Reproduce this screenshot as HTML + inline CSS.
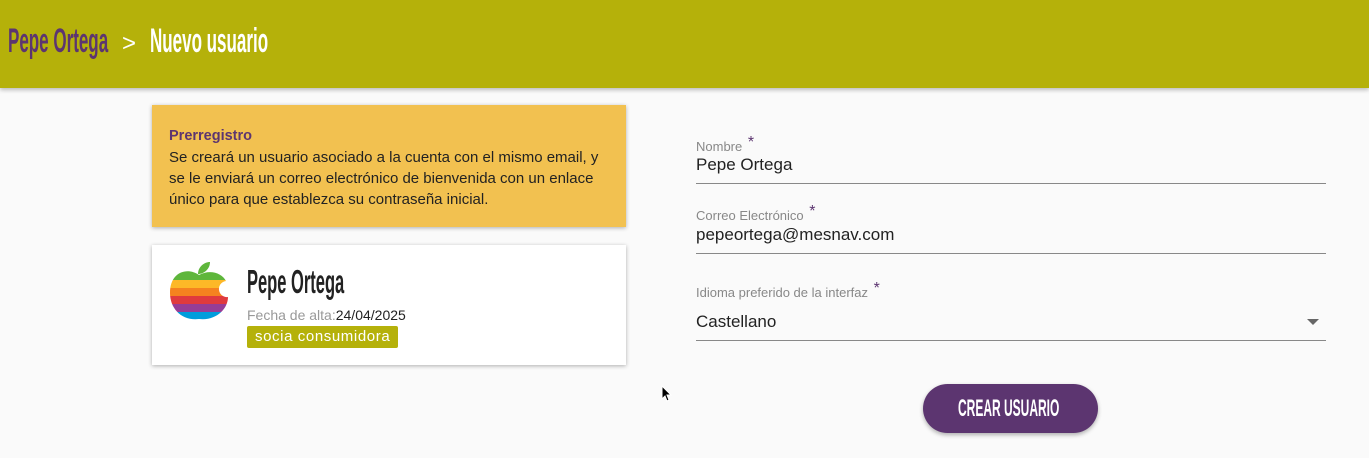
<!DOCTYPE html>
<html><head><meta charset="utf-8"><style>
body{margin:0;width:1369px;height:458px;background:#fafafa;font-family:"Liberation Sans",sans-serif;position:relative;overflow:hidden}
.hdr{position:absolute;left:0;top:0;width:1369px;height:88px;background:#b5b10a;box-shadow:0 2px 4px rgba(0,0,0,.25)}
.cond{font-family:"Liberation Sans Narrow","Liberation Sans",sans-serif;font-weight:bold;display:inline-block;transform:scaleX(.5);transform-origin:left;white-space:nowrap}
.hdr .t{position:absolute;top:22px;font-size:34px}
.card{position:absolute;background:#fff;box-shadow:0 1px 4px rgba(0,0,0,.3)}
.lbl{position:absolute;font-size:13px;color:#888}
.lbl b{color:#5c3570;font-size:16px;font-weight:normal;position:relative;top:-4px;left:2px}
.val{position:absolute;font-size:17px;color:#222}
.line{position:absolute;left:696px;width:630px;height:1px;background:#888}
</style></head><body>
<div class="hdr">
<span class="t cond" style="left:8px;color:#5c3570">Pepe Ortega</span>
<span style="position:absolute;left:122px;top:30px;color:#fff;font-size:24px">&gt;</span>
<span class="t cond" style="left:150px;color:#fff">Nuevo usuario</span>
</div>
<div class="card" style="left:152px;top:105px;width:474px;height:122px;background:#f2c150">
<div style="position:absolute;left:17px;top:20px;font-size:15px;line-height:21px;color:#222;width:440px"><b style="color:#5c3570;font-size:14.5px">Prerregistro</b><br>Se creará un usuario asociado a la cuenta con el mismo email, y se le enviará un correo electrónico de bienvenida con un enlace único para que establezca su contraseña inicial.</div>
</div>
<div class="card" style="left:152px;top:245px;width:474px;height:120px">
<svg style="position:absolute;left:16px;top:14px" width="62" height="64" viewBox="0 0 62 64">
<defs><clipPath id="c"><path d="M31 16 C20 8 2 12 2 34 C2 50 14 62 31 60 C48 62 60 50 60 38 A8 8 0 0 1 58 22 C54 14 42 10 31 16Z"/></clipPath></defs>
<path d="M30 15 C30 8 36 3 42 3 C42 10 36 15 30 15Z" fill="#5eb63b"/>
<g clip-path="url(#c)">
<rect x="0" y="0" width="62" height="21" fill="#5eb63b"/>
<rect x="0" y="21" width="62" height="8" fill="#fdb827"/>
<rect x="0" y="29" width="62" height="8" fill="#f5821f"/>
<rect x="0" y="37" width="62" height="8" fill="#e03a3e"/>
<rect x="0" y="45" width="62" height="8" fill="#963d97"/>
<rect x="0" y="53" width="62" height="11" fill="#009ddc"/>
</g></svg>
<span class="cond" style="position:absolute;left:95px;top:18px;font-size:33px;color:#222">Pepe Ortega</span>
<div style="position:absolute;left:95px;top:62px;font-size:14px;color:#999">Fecha de alta:<span style="color:#222">24/04/2025</span></div>
<div style="position:absolute;left:95px;top:81px;height:22px;padding:0 8px;background:#b5b10a;color:#fff;font-size:15px;line-height:22px;border-radius:2px;letter-spacing:.6px">socia consumidora</div>
</div>
<div class="lbl" style="left:696px;top:138px">Nombre <b>*</b></div>
<div class="val" style="left:696px;top:155px">Pepe Ortega</div>
<div class="line" style="top:183px"></div>
<div class="lbl" style="left:696px;top:207px">Correo Electrónico <b>*</b></div>
<div class="val" style="left:696px;top:225px">pepeortega@mesnav.com</div>
<div class="line" style="top:253px"></div>
<div class="lbl" style="left:696px;top:284px">Idioma preferido de la interfaz <b>*</b></div>
<div class="val" style="left:696px;top:312px">Castellano</div>
<div style="position:absolute;left:1307px;top:319px;width:0;height:0;border-left:6px solid transparent;border-right:6px solid transparent;border-top:6px solid #666"></div>
<div class="line" style="top:340px"></div>
<div style="position:absolute;left:923px;top:384px;width:175px;height:49px;border-radius:25px;background:#5c3570;box-shadow:0 2px 4px rgba(0,0,0,.3)">
<span class="cond" style="position:absolute;left:35px;top:11px;font-size:24px;color:#fff">CREAR USUARIO</span></div>
<svg style="position:absolute;left:661px;top:385px" width="12" height="18" viewBox="0 0 12 18"><path d="M1 1 L1 14 L4 11 L6 16 L8 15 L6 10 L10 10 Z" fill="#000" stroke="#fff" stroke-width="1"/></svg>
</body></html>
